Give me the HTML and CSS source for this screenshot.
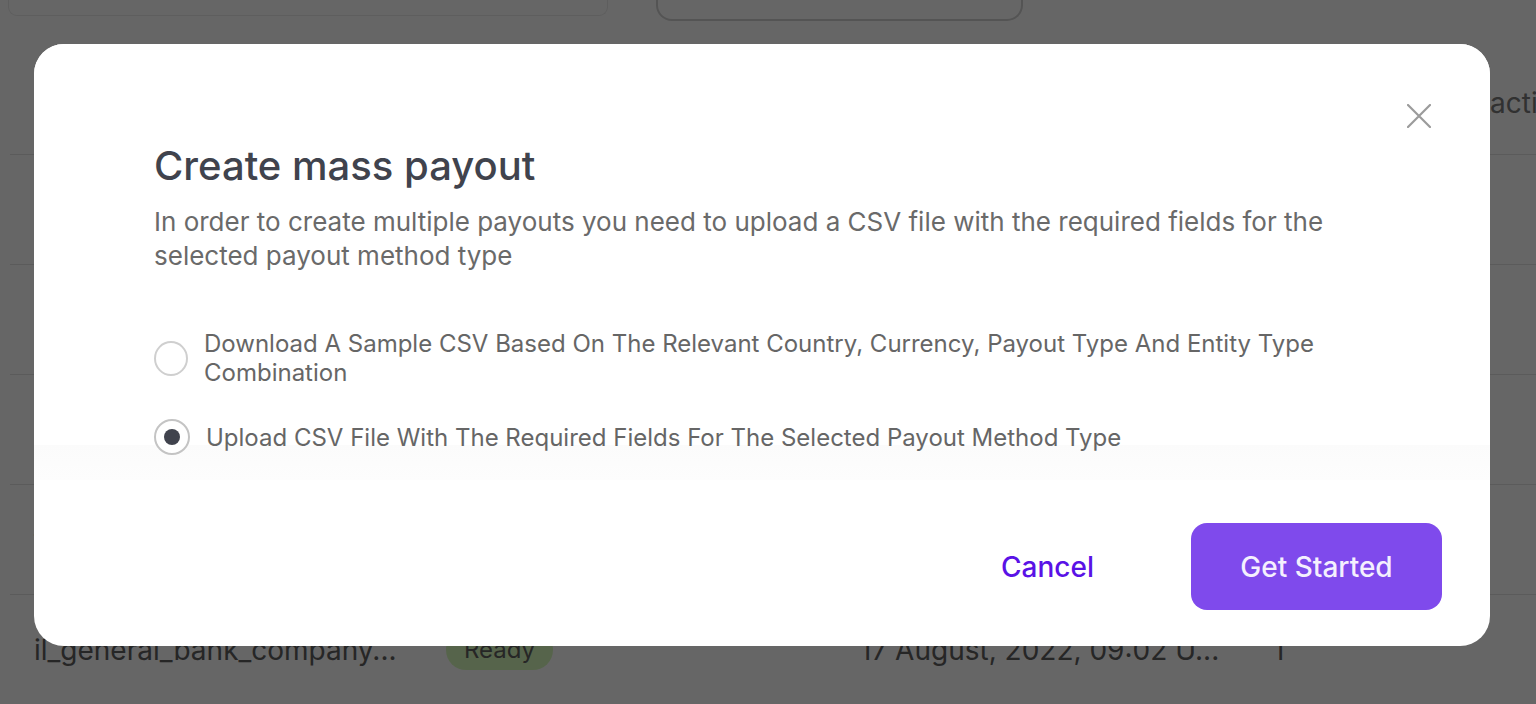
FILE: index.html
```html
<!DOCTYPE html>
<html lang="en">
<head>
<meta charset="utf-8">
<title>Create mass payout</title>
<link rel="stylesheet" href="styles.css">
</head>
<body>
<div class="page">
  <div class="toolbar">
    <div class="search-card"></div>
    <div class="filter-box"></div>
  </div>
  <div class="table">
    <div class="row head">
      <span class="cell c-name">File name</span>
      <span class="cell c-status">Status</span>
      <span class="cell c-date">Created</span>
      <span class="cell c-count">Count</span>
      <span class="cell c-tx">Transactions</span>
    </div>
    <div class="row">
      <span class="cell c-name">us_individual_bank.csv</span>
      <span class="cell c-status"><span class="badge">Ready</span></span>
      <span class="cell c-date">17 August, 2022, 10:14 U...</span>
      <span class="cell c-count">3</span>
    </div>
    <div class="row">
      <span class="cell c-name">gb_company_bank.csv</span>
      <span class="cell c-status"><span class="badge">Ready</span></span>
      <span class="cell c-date">17 August, 2022, 09:40 U...</span>
      <span class="cell c-count">2</span>
    </div>
    <div class="row">
      <span class="cell c-name">de_individual_card.csv</span>
      <span class="cell c-status"><span class="badge">Ready</span></span>
      <span class="cell c-date">17 August, 2022, 09:21 U...</span>
      <span class="cell c-count">5</span>
    </div>
    <div class="row">
      <span class="cell c-name">fr_company_bank.csv</span>
      <span class="cell c-status"><span class="badge">Ready</span></span>
      <span class="cell c-date">17 August, 2022, 09:10 U...</span>
      <span class="cell c-count">1</span>
    </div>
    <div class="row">
      <span class="cell c-name">il_general_bank_company...</span>
      <span class="cell c-status"><span class="badge">Ready</span></span>
      <span class="cell c-date">17 August, 2022, 09:02 U...</span>
      <span class="cell c-count">1</span>
    </div>
  </div>
</div>

<div class="overlay">
  <div class="modal" role="dialog" aria-labelledby="modal-title">
    <button class="close" aria-label="Close">
      <svg width="24" height="24" viewBox="0 0 24 24" fill="none" stroke="#9b9b9b" stroke-width="2.2" stroke-linecap="round">
        <path d="M1 1 L23 23 M23 1 L1 23"/>
      </svg>
    </button>
    <div class="modal-body">
      <h2 id="modal-title" class="title">Create mass payout</h2>
      <p class="desc">In order to create multiple payouts you need to upload a CSV file with the required fields for the selected payout method type</p>
      <div class="options">
        <label class="option">
          <span class="radio"></span>
          <span class="option-text">Download A Sample CSV Based On The Relevant Country, Currency, Payout Type And Entity Type Combination</span>
        </label>
        <label class="option">
          <span class="radio checked"></span>
          <span class="option-text">Upload CSV File With The Required Fields For The Selected Payout Method Type</span>
        </label>
      </div>
    </div>
    <div class="modal-footer">
      <button class="btn-cancel">Cancel</button>
      <button class="btn-primary">Get Started</button>
    </div>
  </div>
</div>
</body>
</html>
```

FILE: styles.css
```css
* { box-sizing: border-box; }

html, body {
  margin: 0;
  padding: 0;
}

body {
  width: 1536px;
  height: 704px;
  overflow: hidden;
  background: #ffffff;
  font-family: Inter, "Noto Sans", "Liberation Sans", sans-serif;
  color: #333;
}

/* ---------- background page ---------- */
.page {
  width: 1536px;
}

.toolbar {
  display: flex;
  align-items: flex-start;
  gap: 48px;
  padding-left: 8px;
  height: 60px;
}

.search-card {
  width: 600px;
  height: 16px;
  border: 1px solid #ebebeb;
  border-top: none;
  border-radius: 0 0 9px 9px;
}

.filter-box {
  width: 367px;
  height: 21px;
  border: 2px solid #d2d2d2;
  border-top: none;
  border-radius: 0 0 16px 16px;
}

.table {
  margin-left: 10px;
}

.row {
  display: grid;
  grid-template-columns: 24px 412px 414px 413px 143px 1fr;
  align-items: center;
  height: 110px;
  border-bottom: 1px solid #e4e4e4;
  font-size: 28px;
  color: #606060;
  white-space: nowrap;
}

.row.head {
  height: 95px;
  color: #7a7a7a;
  padding-bottom: 8px;
}

.c-name { grid-column: 2; }
.c-status { grid-column: 3; }
.c-date { grid-column: 4; }
.c-count { grid-column: 5; }
.c-tx { grid-column: 6; overflow: hidden; }

.badge {
  display: inline-block;
  height: 41px;
  line-height: 41px;
  padding: 0 18px;
  border-radius: 20px;
  background: #d8fbbc;
  color: #606060;
  font-size: 24px;
}

/* ---------- overlay + modal ---------- */
.overlay {
  position: fixed;
  inset: 0;
  background: rgba(0, 0, 0, 0.6);
  padding: 44px 46px 0 34px;
}

.modal {
  position: relative;
  width: 1456px;
  height: 602px;
  background: #ffffff;
  border-radius: 30px;
  display: flex;
  flex-direction: column;
}

.close {
  position: absolute;
  top: 60px;
  right: 59px;
  width: 24px;
  height: 24px;
  padding: 0;
  border: none;
  background: none;
  display: flex;
}

.modal-body {
  height: 436px;
  padding: 98px 120px 0 120px;
  background: linear-gradient(to bottom, #ffffff 0, #ffffff calc(100% - 35px), #fbfbfb calc(100% - 35px), #fdfdfd 100%);
  border-radius: 30px 30px 0 0;
}

.title {
  margin: 0;
  font-size: 40px;
  line-height: 48px;
  font-weight: 500;
  color: #40434d;
}

.desc {
  margin: 15px 0 0;
  font-size: 26px;
  line-height: 34px;
  font-weight: 400;
  color: #6a6a6a;
}

.options {
  display: flex;
  flex-direction: column;
  gap: 32px;
  margin-top: 56px;
}

.option {
  display: flex;
  align-items: center;
  gap: 16px;
}

.radio {
  flex: 0 0 auto;
  width: 34px;
  height: 35px;
  border-radius: 50%;
  border: 2px solid #cfcfcf;
  background: #fff;
  display: flex;
  align-items: center;
  justify-content: center;
}

.radio.checked {
  width: 36px;
  height: 36px;
  border-color: #c4c4c4;
}

.radio.checked::before {
  content: "";
  width: 16px;
  height: 16px;
  border-radius: 50%;
  background: #40434d;
}

.option-text {
  font-size: 24px;
  line-height: 29px;
  color: #666666;
}

.modal-footer {
  flex: 1;
  display: flex;
  justify-content: flex-end;
  align-items: flex-start;
  gap: 65px;
  padding: 43px 48px 36px 0;
}

.btn-cancel {
  height: 87px;
  padding: 0 32px;
  border: none;
  background: none;
  font-family: inherit;
  font-size: 28px;
  font-weight: 500;
  color: #5a12e6;
}

.btn-primary {
  min-width: 251px;
  height: 87px;
  padding: 0 48px;
  border: none;
  border-radius: 16px;
  background: #7f4aec;
  font-family: inherit;
  font-size: 28px;
  font-weight: 500;
  color: #f4f0fe;
}
```
